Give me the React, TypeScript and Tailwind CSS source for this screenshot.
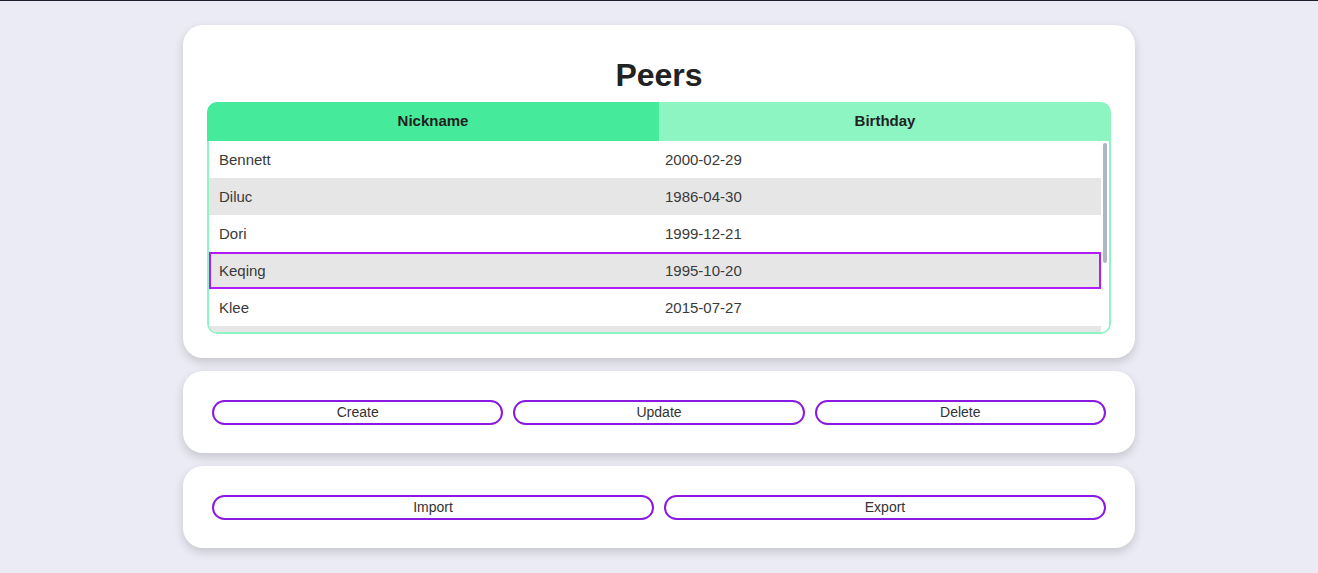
import React from "react";

const rows = [
  ["Bennett", "2000-02-29"],
  ["Diluc", "1986-04-30"],
  ["Dori", "1999-12-21"],
  ["Keqing", "1995-10-20"],
  ["Klee", "2015-07-27"],
  ["Lisa", "1993-06-09"],
];

function Btn({ label }: { label: string }) {
  return (
    <button className="flex-1 mx-[5px] h-[25px] rounded-full border-2 border-[#8a19e2] bg-white text-[14px] leading-[20px] text-[#333]">
      {label}
    </button>
  );
}

export default function App() {
  return (
    <div className="min-h-[573px] bg-[#ebebf5] border-t border-[#1c1f2e] font-['Liberation_Sans',Arial,sans-serif]">
      <div className="w-[952px] mx-auto pt-6 flex flex-col gap-[13px]">
        <div className="bg-white rounded-[20px] shadow-[0_4px_10px_rgba(0,0,0,0.16)] px-6 pt-6 pb-6">
          <div className="h-[53px] pb-[2px] flex items-center justify-center text-[32px] font-bold text-[#222]">
            Peers
          </div>
          <div className="rounded-[10px] overflow-hidden">
            <div className="flex h-[39px] text-[15px] font-bold text-[#222]">
              <div className="flex-1 bg-[#45ea9a] flex items-center justify-center">Nickname</div>
              <div className="flex-1 bg-[#8cf5c2] flex items-center justify-center">Birthday</div>
            </div>
            <div className="border-x-2 border-b-2 border-[#8cf5c2] rounded-b-[10px] h-[193px] overflow-hidden flex">
              <div className="flex-1 overflow-hidden">
                <table className="w-full table-fixed border-collapse text-[15px] text-[#3a3a3a]">
                  <tbody>
                    {rows.map((r, i) => {
                      const sel = i === 3;
                      return (
                        <tr
                          key={r[0]}
                          className={`${i % 2 === 1 ? "bg-[#e6e6e6]" : "bg-white"} ${sel ? "outline-2 outline-[#b11cff] -outline-offset-2" : ""}`}
                        >
                          <td className="h-[37px] px-[10px] pt-px text-left">{r[0]}</td>
                          <td className="h-[37px] px-[10px] pt-px text-left">{r[1]}</td>
                        </tr>
                      );
                    })}
                  </tbody>
                </table>
              </div>
              <div className="w-2 bg-white pt-[2px] pb-[2px] flex flex-col items-center">
                <div className="w-1 h-[120px] rounded-full bg-[#aeb6c4]" />
              </div>
            </div>
          </div>
        </div>
        <div className="bg-white rounded-[20px] shadow-[0_4px_10px_rgba(0,0,0,0.16)] px-6 flex items-center h-[82px]">
          <div className="flex w-full">
            <Btn label="Create" />
            <Btn label="Update" />
            <Btn label="Delete" />
          </div>
        </div>
        <div className="bg-white rounded-[20px] shadow-[0_4px_10px_rgba(0,0,0,0.16)] px-6 flex items-center h-[82px]">
          <div className="flex w-full">
            <Btn label="Import" />
            <Btn label="Export" />
          </div>
        </div>
      </div>
    </div>
  );
}
